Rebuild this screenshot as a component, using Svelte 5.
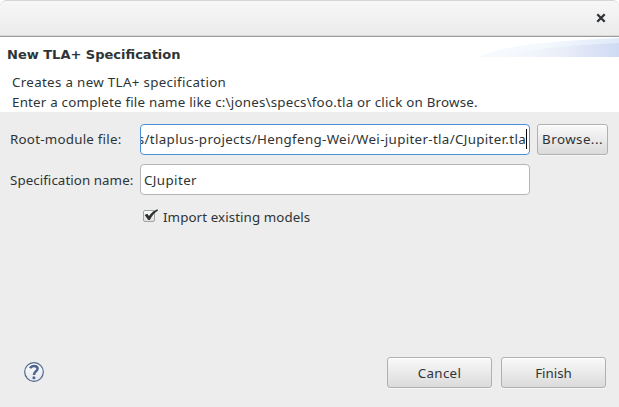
<script>
  let rootFile = $state('s/tlaplus-projects/Hengfeng-Wei/Wei-jupiter-tla/CJupiter.tla');
  let specName = $state('CJupiter');
  let importModels = $state(true);
</script>

<div class="backdrop">
  <main class="dialog">
    <div class="titlebar">
      <button class="close" aria-label="Close">
        <svg width="10" height="10" viewBox="0 0 10 10">
          <path d="M1.3 1.3L8.7 8.7M8.7 1.3L1.3 8.7" stroke="#2e3436" stroke-width="2.3" />
        </svg>
      </button>
    </div>

    <header>
      <svg class="sweep" width="141" height="19" viewBox="0 0 141 19">
        <defs>
          <linearGradient id="outer" x1="0" x2="1" y1="0" y2="0">
            <stop offset="0" stop-color="#f7fafd" />
            <stop offset=".5" stop-color="#f3f8fd" />
            <stop offset="1" stop-color="#dfe9f9" />
          </linearGradient>
          <linearGradient id="inner" x1="0" x2="1" y1="0" y2="0">
            <stop offset="0" stop-color="#f8fafd" />
            <stop offset=".5" stop-color="#ebeff9" />
            <stop offset="1" stop-color="#cfdaf4" />
          </linearGradient>
        </defs>
        <path d="M0 19C22 8 72 3 141 0V19Z" fill="url(#outer)" />
        <path d="M20 19C52 11 94 7 141 5V19Z" fill="url(#inner)" />
      </svg>
      <h1>New TLA+ Specification</h1>
      <p class="l1">Creates a new TLA+ specification</p>
      <p class="l2">Enter a complete file name like c:\jones\specs\foo.tla or click on Browse.</p>
    </header>

    <section class="form">
      <span class="label root">Root-module file:</span>
      <div class="field focused"><span class="path">{rootFile}</span><i class="caret"></i></div>
      <button class="btn browse"><span>Browse...</span></button>

      <span class="label spec">Specification name:</span>
      <div class="field"><span class="name">{specName}</span></div>
    </section>

    <button class="check" role="checkbox" aria-checked={importModels} onclick={() => (importModels = !importModels)}>
      <svg width="17" height="15" viewBox="0 0 17 15">
        <defs>
          <linearGradient id="box" x1="0" x2="0" y1="0" y2="1">
            <stop offset="0" stop-color="#fff" />
            <stop offset="1" stop-color="#dedede" />
          </linearGradient>
        </defs>
        <rect x=".5" y="2.5" width="11" height="11" rx="1.5" fill="url(#box)" stroke="#a3a3a3" />
        {#if importModels}
          <path d="M1.6 7L4.2 5.8L6 8C8.3 4.8 11 2.3 14.8 1.2V2.8C11.2 5 8.8 8.3 6.9 11.9H5.3Z" fill="#2e3436" />
        {/if}
      </svg>
      <span>Import existing models</span>
    </button>

    <footer>
      <button class="help" aria-label="Help">
        <svg width="20" height="20" viewBox="0 0 20 20">
          <defs>
            <linearGradient id="disc" x1="0" x2="0" y1="0" y2="1">
              <stop offset="0" stop-color="#fff" />
              <stop offset="1" stop-color="#e2e5eb" />
            </linearGradient>
          </defs>
          <circle cx="10" cy="10" r="9.3" fill="url(#disc)" stroke="#4d668f" stroke-width="1.2" />
          <path d="M6.1 6.2C6.9 4.6 8.2 4 10 4C12.3 4 13.6 5 13.6 6.8C13.6 9.4 9.9 9.2 9.9 12.9" fill="none" stroke="#4d668f" stroke-width="2.5" />
          <circle cx="9.9" cy="15.7" r="1.5" fill="#4d668f" />
        </svg>
      </button>
      <button class="btn cancel"><span>Cancel</span></button>
      <button class="btn finish"><span>Finish</span></button>
    </footer>
  </main>
</div>

<style>
  :global(body) {
    margin: 0;
    overflow: hidden;
  }
  .backdrop {
    width: 619px;
    height: 407px;
    background: #fff;
  }
  .dialog {
    width: 619px;
    height: 407px;
    display: flex;
    flex-direction: column;
    background: #ededed;
    border-radius: 6px 6px 0 0;
    overflow: hidden;
    color: #2e3436;
    font: 13.33px/20px "Noto Sans", sans-serif;
    white-space: nowrap;
  }
  button {
    font: inherit;
    color: inherit;
    margin: 0;
    padding: 0;
    border: 0;
    background: none;
  }
  .titlebar {
    box-sizing: border-box;
    height: 37px;
    flex: none;
    display: flex;
    justify-content: flex-end;
    align-items: center;
    padding: 0 13px 1px 0;
    background: linear-gradient(#f7f7f7, #ebebeb);
    border-top: 1px solid #d5d5d5;
    border-bottom: 1px solid #9b9b9b;
    border-radius: 6px 6px 0 0;
    box-shadow: inset 0 -1px #d9d9d9;
  }
  .close {
    display: flex;
  }
  header {
    box-sizing: border-box;
    position: relative;
    height: 75px;
    flex: none;
    padding: 8px 0 0 7px;
    background: #fff;
  }
  .sweep {
    position: absolute;
    top: 1px;
    right: 0;
  }
  h1 {
    margin: 0 0 7px;
    font-family: "DejaVu Sans", "Liberation Sans", sans-serif;
    font-size: 13px;
    font-weight: 700;
    line-height: 20px;
    letter-spacing: 0;
  }
  p {
    margin: 0 0 0 5px;
  }
  .l1 {
    letter-spacing: 0.33px;
  }
  .l2 {
    letter-spacing: 0.215px;
  }
  .root {
    letter-spacing: 0.24px;
  }
  .spec {
    letter-spacing: 0.07px;
  }
  .path {
    letter-spacing: 0.34px;
  }
  .name {
    letter-spacing: 0.4px;
  }
  .browse {
    letter-spacing: 0.45px;
  }
  .form {
    display: grid;
    grid-template-columns: 130px 390px 72px;
    grid-template-rows: 32px 31px;
    column-gap: 0;
    row-gap: 9px;
    padding: 11px 0 0 10px;
    align-items: center;
  }
  .field {
    box-sizing: border-box;
    height: 31px;
    display: flex;
    align-items: center;
    border: 1px solid #b5b5b5;
    border-radius: 4px;
    background: #fff;
    padding: 0 3px;
    overflow: hidden;
  }
  .focused {
    justify-content: flex-end;
    border-color: #4a90d9;
    padding: 0 2px 0 1px;
  }
  .caret {
    width: 1px;
    height: 20px;
    flex: none;
    background: #000;
  }
  .btn {
    box-sizing: border-box;
    height: 31px;
    display: flex;
    justify-content: center;
    align-items: center;
    border: 1px solid #b0b0b0;
    border-radius: 3px;
    background: linear-gradient(#f9f9f9, #dbdbdb);
    box-shadow: 0 1px #f7f7f7, inset 0 1px #fff;
  }
  .browse {
    margin-left: 7px;
    width: 71px;
  }
  .check {
    display: flex;
    align-items: flex-start;
    gap: 3px;
    margin: 12px 0 0 143px;
    width: fit-content;
    letter-spacing: 0.09px;
  }
  .check svg {
    margin-top: 1px;
  }
  footer {
    display: flex;
    align-items: center;
    gap: 9px;
    margin: auto 13px 19px 24px;
  }
  .help {
    display: flex;
    margin: 0 auto 2px 0;
  }
  .cancel, .finish {
    width: 105px;
  }
  .cancel {
    letter-spacing: 0.3px;
  }
</style>
